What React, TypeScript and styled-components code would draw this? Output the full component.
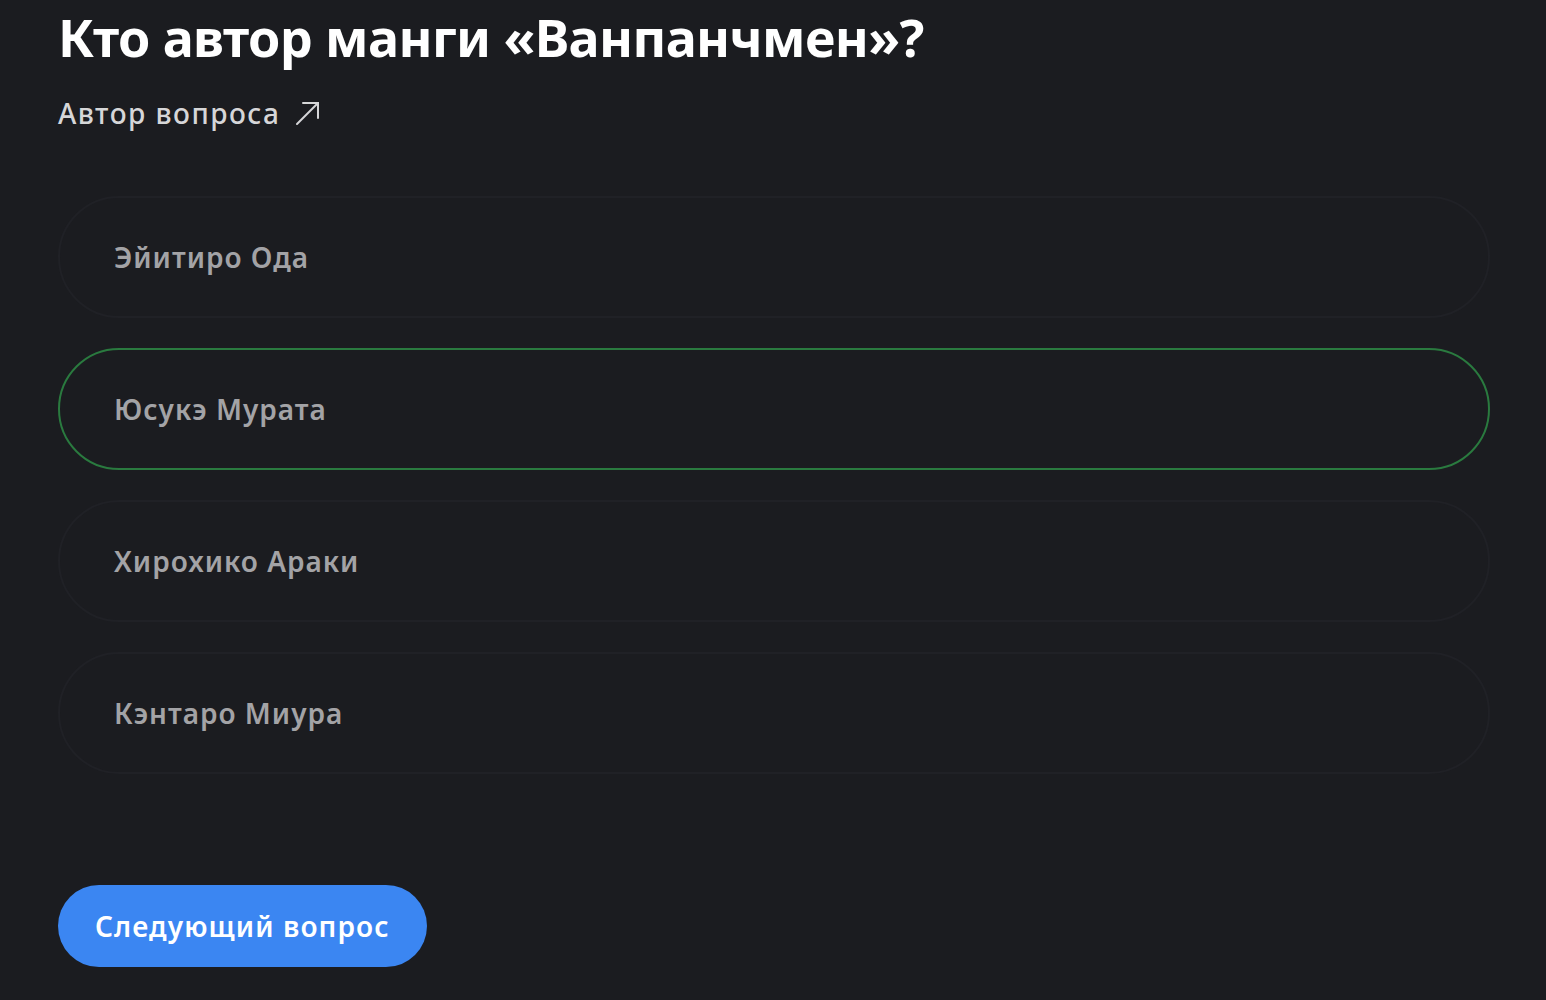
import React from "react";
import styled, { createGlobalStyle } from "styled-components";

const Global = createGlobalStyle`
  html, body { margin: 0; padding: 0; background: #1b1c20; }
  body { font-family: "Noto Sans", "Open Sans", sans-serif; }
  * { box-sizing: border-box; }
`;

const Page = styled.main`
  display: flex;
  flex-direction: column;
  padding: 0 56px 0 58px;
  min-height: 1000px;
  background: #1b1c20;
`;

const Title = styled.h1`
  margin: 2px 0 0;
  font-size: 52px;
  line-height: 70px;
  font-weight: 700;
  color: #ffffff;
  letter-spacing: -0.6px;
`;

const AuthorLink = styled.a`
  display: inline-flex;
  align-items: center;
  gap: 14px;
  margin-top: 23px;
  font-size: 28px;
  line-height: 36px;
  font-weight: 500;
  color: #d6d6d8;
  text-decoration: none;
  letter-spacing: 1.5px;
  align-self: flex-start;
`;

const Options = styled.div`
  display: flex;
  flex-direction: column;
  gap: 30px;
  margin-top: 65px;
`;

const Option = styled.button<{ $selected?: boolean }>`
  display: flex;
  align-items: center;
  height: 122px;
  padding: 0 0 0 54px;
  border-radius: 61px;
  background: #1b1c20;
  border: 2px solid ${(p) => (p.$selected ? "#2a7a3f" : "#202126")};
  font-family: inherit;
  font-size: 28px;
  font-weight: 600;
  color: #a3a3a6;
  letter-spacing: 1px;
  text-align: left;
  cursor: pointer;
`;

const NextButton = styled.button`
  align-self: flex-start;
  margin-top: 111px;
  height: 82px;
  padding: 0 37px;
  border: none;
  border-radius: 41px;
  background: #3b86f2;
  font-family: inherit;
  font-size: 28px;
  font-weight: 600;
  color: #ffffff;
  letter-spacing: 1.1px;
  cursor: pointer;
`;

const answers = ["Эйитиро Ода", "Юсукэ Мурата", "Хирохико Араки", "Кэнтаро Миура"];

export default function App() {
  return (
    <>
      <Global />
      <Page>
        <Title>Кто автор манги «Ванпанчмен»?</Title>
        <AuthorLink href="#">
          Автор вопроса
          <svg width="26" height="26" viewBox="0 0 26 26" fill="none" stroke="#d6d6d8" strokeWidth="2" strokeLinecap="round">
            <path d="M3 24 L24 3" />
            <path d="M9 3 H24 V18" />
          </svg>
        </AuthorLink>
        <Options>
          {answers.map((a, i) => (
            <Option key={a} $selected={i === 1}>
              {a}
            </Option>
          ))}
        </Options>
        <NextButton>Следующий вопрос</NextButton>
      </Page>
    </>
  );
}
